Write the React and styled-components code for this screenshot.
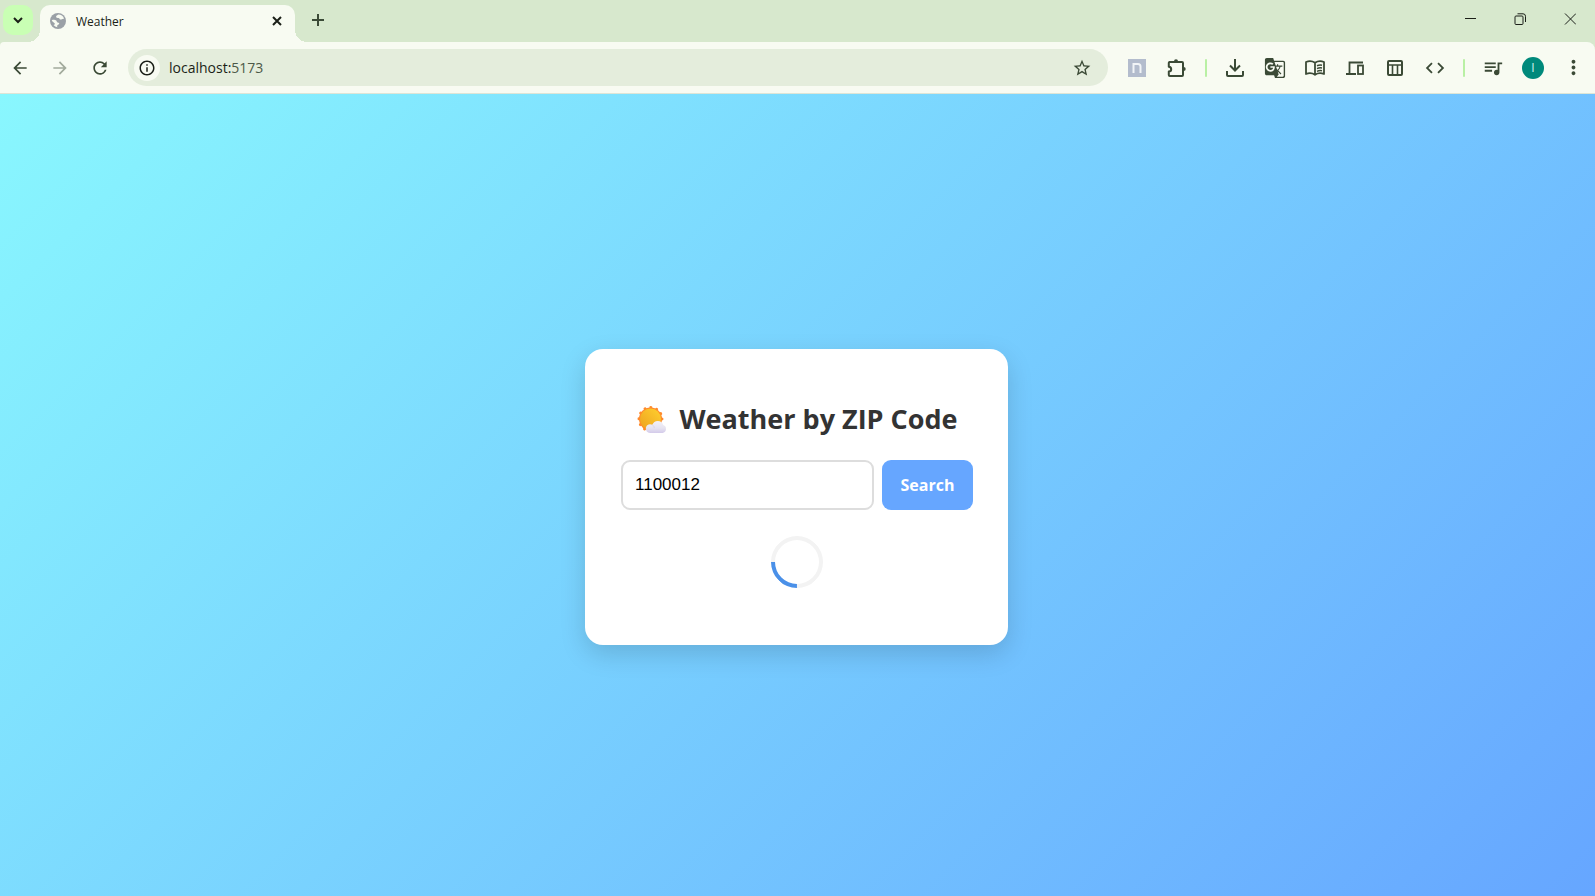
import React, { useState } from "react";
import styled, { createGlobalStyle, css } from "styled-components";
import {
  MdArrowBack,
  MdArrowForward,
  MdRefresh,
  MdInfoOutline,
  MdStarBorder,
  MdGTranslate,
  MdCode,
  MdQueueMusic,
  MdMoreVert,
} from "react-icons/md";

const GlobalStyle = createGlobalStyle`
  *, *::before, *::after { box-sizing: border-box; }
  body { margin: 0; font-family: "Segoe UI", "Open Sans", "Noto Sans", sans-serif; }
  button { border: 0; padding: 0; background: none; font: inherit; color: inherit; cursor: pointer; }
  svg { display: block; flex: none; }
`;

const center = css`
  display: flex;
  align-items: center;
  justify-content: center;
`;

const Window = styled.div`
  min-height: 100vh;
  display: flex;
  flex-direction: column;
  background: #d7e8cd;
`;

const TabStrip = styled.header`
  display: flex;
  align-items: flex-start;
  height: 42px;
  padding-left: 3px;
  color: #1b1f18;
`;

const TabSearch = styled.button`
  ${center}
  width: 30px;
  height: 30px;
  margin: 5px 7px 0 0;
  border-radius: 10px;
  background: #c9ffb4;
`;

const Tab = styled.div`
  position: relative;
  display: flex;
  align-items: center;
  gap: 10px;
  width: 255px;
  height: 37px;
  margin-top: 5px;
  padding: 0 10px 6px;
  border-radius: 10px 10px 0 0;
  background: #f8fbf2;

  &::before,
  &::after {
    content: "";
    position: absolute;
    bottom: 0;
    width: 12px;
    height: 12px;
  }
  &::before {
    right: 100%;
    background: radial-gradient(circle at 0 0, transparent 12px, #f8fbf2 12px);
  }
  &::after {
    left: 100%;
    background: radial-gradient(circle at 100% 0, transparent 12px, #f8fbf2 12px);
  }
`;

const TabTitle = styled.span`
  flex: 1;
  padding-top: 2px;
  font-size: 12px;
  line-height: 16px;
`;

const TabClose = styled.button`
  ${center}
  width: 16px;
  height: 16px;
`;

const NewTab = styled.button`
  ${center}
  width: 28px;
  height: 28px;
  margin: 6px 0 0 9px;
  color: #3b4a36;
`;

const WindowControls = styled.div`
  display: flex;
  margin-left: auto;
`;

const WindowButton = styled.button`
  ${center}
  width: 50px;
  height: 38px;
`;

const Toolbar = styled.nav`
  display: flex;
  align-items: center;
  height: 52px;
  padding-right: 2px;
  border-bottom: 1px solid #dde5d6;
  border-radius: 4px 8px 0 0;
  background: #f8fbf2;
  color: #3b4a36;
`;

const ToolButton = styled.button`
  ${center}
  width: 40px;
  height: 36px;
  opacity: ${(p) => (p.disabled ? 0.45 : 1)};
`;

const Divider = styled.span`
  width: 2px;
  height: 18px;
  margin: 0 8px;
  border-radius: 1px;
  background: #b9f0a4;
`;

const AddressBar = styled.div`
  flex: 1;
  display: flex;
  align-items: center;
  height: 37px;
  margin: 0 9px 0 8px;
  padding: 0 6px;
  border-radius: 19px;
  background: #e4eddc;
`;

const SiteInfo = styled.button`
  ${center}
  width: 26px;
  height: 26px;
  border-radius: 50%;
  background: #f8fbf2;
  color: #1b1f18;
`;

const Address = styled.a`
  flex: 1;
  margin-left: 9px;
  font-size: 14px;
  line-height: 20px;
  color: #1b1f18;
  text-decoration: none;
`;

const Port = styled.span`
  color: #4c5947;
`;

const StarButton = styled.button`
  ${center}
  width: 40px;
  height: 32px;
`;

const Avatar = styled.span`
  ${center}
  width: 22px;
  height: 22px;
  border-radius: 50%;
  background: #00897b;
  color: #d9f0ed;
  font-size: 12px;
`;

const Page = styled.main`
  flex: 1;
  ${center}
  padding: 4px 2px 0 0;
  background: linear-gradient(135deg, #89f7fe, #66a6ff);
`;

const Card = styled.section`
  width: 423px;
  max-width: 100%;
  padding: 35px 35px 35px 36px;
  border-radius: 18px;
  background: #fff;
  box-shadow: 0 9px 26px rgba(0, 0, 0, 0.15);
`;

const Title = styled.h1`
  ${center}
  gap: 11px;
  margin: 15px 0 21px;
  color: #333;
  font-size: 27px;
  font-weight: 700;
  line-height: 40px;
  white-space: nowrap;
`;

const SearchForm = styled.form`
  display: flex;
  gap: 8px;
  height: 50px;
`;

const ZipInput = styled.input`
  flex: 1;
  min-width: 0;
  padding: 0 12px;
  border: 2px solid #ddd;
  border-radius: 9px;
  outline: none;
  background: #fff;
  color: #000;
  font-family: Arial, "Liberation Sans", sans-serif;
  font-size: 17px;
`;

const SearchButton = styled.button`
  width: 91px;
  border-radius: 9px;
  background: #66a6ff;
  color: #fff;
  font-size: 16px;
  font-weight: 700;
`;

const Spinner = styled.div`
  width: 52px;
  height: 52px;
  margin: 26px auto 22px;
  border: 4px solid #f3f3f3;
  border-top-color: #4a90e8;
  border-radius: 50%;
  transform: rotate(225deg);
`;

const Line = ({ size = 18, width = 2, children, ...rest }) => (
  <svg
    width={size}
    height={size}
    viewBox={`0 0 ${size} ${size}`}
    fill="none"
    stroke="currentColor"
    strokeWidth={width}
    aria-hidden="true"
    {...rest}
  >
    {children}
  </svg>
);

const GlobeIcon = () => (
  <svg width="16" height="16" viewBox="0 0 16 16" aria-hidden="true">
    <circle cx="8" cy="8" r="8" fill="#9aa0a6" />
    <path
      d="M8.3 1.6c-.7 1-2.4 1-2.2 2.4.1 1 1.5.9 2.5 1 1 .1.8 1.5 1.8 1.6 1.2.1 1.6-1.2 3.7-.9A6.4 6.4 0 0 0 8.3 1.6ZM1.7 7.2c1.5-.5 3.6-.6 4.5.3.8.8.4 1.7 1.6 1.9 1 .2 1.7.4 1.4 1.4-.3 1-1.7.9-2 2-.1.6-.1 1 .2 1.5a6.4 6.4 0 0 1-3.9-2.2c1-.2 1.5-.7 1.3-1.5-.3-1-2.3-1.5-3.1-3.4Z"
      fill="#f8fbf2"
    />
  </svg>
);

const SunBehindCloud = () => (
  <svg width="32" height="32" viewBox="0 0 32 32" role="img" aria-label="Sun behind cloud">
    <defs>
      <linearGradient id="sun" x1="1" y1="0" x2="0" y2="1">
        <stop offset="0" stopColor="#ffd02e" />
        <stop offset="1" stopColor="#eda121" />
      </linearGradient>
      <linearGradient id="cloud" x1="0" y1="0" x2="0" y2="1">
        <stop offset="0" stopColor="#f3f1f8" />
        <stop offset="0.6" stopColor="#e6e3f0" />
        <stop offset="1" stopColor="#d3caea" />
      </linearGradient>
    </defs>
    <circle cx="14.5" cy="16" r="11.5" fill="#ff8a2c" />
    <circle cx="14.5" cy="16" r="11.5" fill="none" stroke="#ff8a2c" strokeWidth="3" strokeLinecap="round" strokeDasharray="0.1 5.921" />
    <circle cx="14.5" cy="16" r="10.5" fill="url(#sun)" />
    <path
      d="M14 30a4.4 4.4 0 1 1 2.400-8.200 5.700 5.700 0 0 1 10.800.1 4.200 4.200 0 0 1-.7 8.100Z"
      fill="url(#cloud)"
    />
    <path d="M16.400 21.800c1.200.8 1.900 2 1.900 3.300" fill="none" stroke="#d9d6e6" strokeWidth="1" />
  </svg>
);

const PuzzleIcon = () => (
  <Line size={20} strokeLinejoin="round">
    <path d="M2.300 4h12.700a1 1 0 0 1 1 1v12a1 1 0 0 1-1 1H2.800a1 1 0 0 1-1-1v-3.400c3.200-.3 3.200-4.600 0-4.900V5a1 1 0 0 1 .5-1Z" />
    <path d="M7 3.300a2 2 0 0 1 4 0ZM16.700 9a2 2 0 0 1 0 4Z" fill="currentColor" stroke="none" />
  </Line>
);

const BookIcon = () => (
  <Line size={20} width={1.8} strokeLinejoin="round">
    <path d="M10 4.800C7.300 3 3.600 3 1 4v12c2.600-1 6.300-1 9 .8 2.700-1.800 6.400-1.800 9-.8V4c-2.600-1-6.300-1-9 .8ZM10 4.800v12" />
    <path d="M12 7.800c1.700-.8 3.400-1 5-.6M12 10.600c1.700-.8 3.400-1 5-.6M12 13.400c1.700-.8 3.400-1 5-.6" strokeWidth="1.500" />
  </Line>
);

const DevicesIcon = () => (
  <Line size={18} width={1.8}>
    <path d="M3.500 14V3.500h13.500M0 15h10" />
    <rect x="12" y="6.500" width="5" height="8.500" />
  </Line>
);

const ExtensionTile = () => (
  <svg width="18" height="18" viewBox="0 0 18 18" aria-hidden="true">
    <path d="M0 0h18v18H0z" fill="#b3bccd" />
    <path d="M5.500 14V5h4.500a2.500 2.500 0 0 1 2.500 2.500V14" fill="none" stroke="#f1f4f7" strokeWidth="2" />
  </svg>
);

export default function App() {
  const [zip, setZip] = useState("1100012");

  return (
    <>
      <GlobalStyle />
      <Window>
        <TabStrip>
          <TabSearch aria-label="Search tabs">
            <Line size={10}>
              <path d="m1 3 4 4 4-4" />
            </Line>
          </TabSearch>
          <Tab>
            <GlobeIcon />
            <TabTitle>Weather</TabTitle>
            <TabClose aria-label="Close tab">
              <Line size={10}>
                <path d="m1 1 8 8M9 1 1 9" />
              </Line>
            </TabClose>
          </Tab>
          <NewTab aria-label="New tab">
            <Line size={12}>
              <path d="M6 0v12M0 6h12" />
            </Line>
          </NewTab>
          <WindowControls>
            <WindowButton aria-label="Minimize">
              <Line size={12} width={1}>
                <path d="M1 5.500h11" />
              </Line>
            </WindowButton>
            <WindowButton aria-label="Restore">
              <Line size={12} width={1}>
                <rect x="1" y="3" width="8" height="8.500" rx="1" />
                <path d="M3.500.8H9a2.500 2.500 0 0 1 2.500 2.500V9" />
              </Line>
            </WindowButton>
            <WindowButton aria-label="Close window">
              <Line size={12} width={1}>
                <path d="m1 .5 11 11m0-11-11 11" />
              </Line>
            </WindowButton>
          </WindowControls>
        </TabStrip>

        <Toolbar>
          <ToolButton aria-label="Back"><MdArrowBack size={20} /></ToolButton>
          <ToolButton aria-label="Forward" disabled><MdArrowForward size={20} /></ToolButton>
          <ToolButton aria-label="Reload"><MdRefresh size={20} /></ToolButton>
          <AddressBar>
            <SiteInfo aria-label="Site information"><MdInfoOutline size={18} /></SiteInfo>
            <Address href="#">localhost:<Port>5173</Port></Address>
            <StarButton aria-label="Bookmark"><MdStarBorder size={20} /></StarButton>
          </AddressBar>
          <ToolButton aria-label="Notes extension"><ExtensionTile /></ToolButton>
          <ToolButton aria-label="Extensions"><PuzzleIcon /></ToolButton>
          <Divider />
          <ToolButton aria-label="Downloads">
            <Line>
              <path d="M9 0v11M4 6.500l5 5 5-5M1 12v4a1 1 0 0 0 1 1h14a1 1 0 0 0 1-1v-4" />
            </Line>
          </ToolButton>
          <ToolButton aria-label="Translate"><MdGTranslate size={22} /></ToolButton>
          <ToolButton aria-label="Reading mode"><BookIcon /></ToolButton>
          <ToolButton aria-label="Send to devices"><DevicesIcon /></ToolButton>
          <ToolButton aria-label="Customize layout">
            <Line size={16}>
              <rect x="1" y="1" width="14" height="14" rx="1" />
              <path d="M1 5h14M5.500 5v10M10.500 5v10" strokeWidth="1.600" />
            </Line>
          </ToolButton>
          <ToolButton aria-label="Developer tools"><MdCode size={22} /></ToolButton>
          <Divider />
          <ToolButton aria-label="Media controls"><MdQueueMusic size={22} /></ToolButton>
          <ToolButton aria-label="Profile"><Avatar>I</Avatar></ToolButton>
          <ToolButton aria-label="Menu"><MdMoreVert size={23} /></ToolButton>
        </Toolbar>

        <Page>
          <Card>
            <Title>
              <SunBehindCloud />
              Weather by ZIP Code
            </Title>
            <SearchForm onSubmit={(e) => e.preventDefault()}>
              <ZipInput
                type="text"
                aria-label="ZIP code"
                value={zip}
                onChange={(e) => setZip(e.target.value)}
              />
              <SearchButton type="submit">Search</SearchButton>
            </SearchForm>
            <Spinner role="status" aria-label="Loading" />
          </Card>
        </Page>
      </Window>
    </>
  );
}
